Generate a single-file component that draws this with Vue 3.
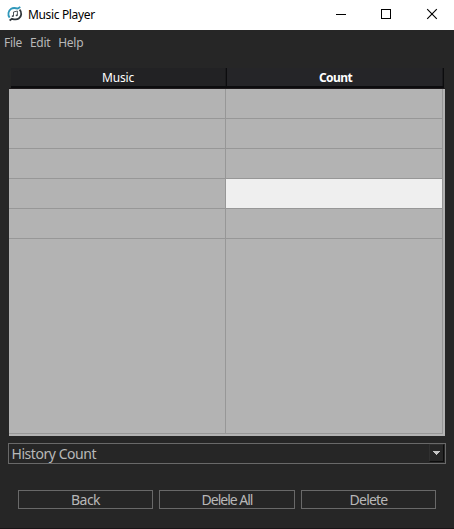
<script setup>
const menus = ['File', 'Edit', 'Help']
const rows = [0, 1, 2, 3, 4]
const actions = ['Back', 'Delele All', 'Delete']
</script>

<template>
  <div class="window">
    <header class="titlebar">
      <svg class="logo" width="16" height="16" viewBox="0 0 16 16">
        <path d="M2.6 11.6C.4 8.8 1.3 4.6 4.2 2.8C6.4 1.4 8.8 2 10.8 2.6L13.3 1" fill="none" stroke="#2f97ba" stroke-width="1.8" />
        <path d="M12.6 3.6C15.2 6.2 14.6 10.6 11.8 12.5C9.6 14 7.3 13.4 5 12.8L2.6 14.4" fill="none" stroke="#30373c" stroke-width="1.8" />
        <path d="M6.5 10V6L10.4 5V9.2" fill="none" stroke="#3d454a" stroke-width=".9" />
        <ellipse cx="5.8" cy="10.1" rx="1.1" ry=".9" fill="#3d454a" />
        <ellipse cx="9.7" cy="9.3" rx="1.1" ry=".9" fill="#3d454a" />
      </svg>
      <span class="title">Music Player</span>
      <svg class="controls" width="118" height="30" viewBox="0 0 118 30" fill="none" stroke="#000">
        <path d="M0 14.5H10" shape-rendering="crispEdges" />
        <rect x="45.5" y="9.5" width="9" height="9" shape-rendering="crispEdges" />
        <path d="M91.2 9.2L100.8 18.8M100.8 9.2L91.2 18.8" stroke-width="1.15" />
      </svg>
    </header>
    <nav class="menubar">
      <span v-for="m in menus" :key="m">{{ m }}</span>
    </nav>
    <main>
      <section class="table">
        <div class="head">
          <div class="th"><span class="music">Music</span></div>
          <div class="th active"><span class="count">Count</span></div>
        </div>
        <div class="body">
          <div v-for="r in rows" :key="r" class="row">
            <div class="cell"></div>
            <div class="cell" :class="{ selected: r === 3 }"></div>
          </div>
          <div class="row rest">
            <div class="cell"></div>
            <div class="cell"></div>
          </div>
        </div>
      </section>
      <div class="combo">
        <span>History Count</span>
        <div class="arrow">
          <svg width="7" height="4" viewBox="0 0 7 4" shape-rendering="crispEdges"><path d="M0 0H7V1H6V2H5V3H4V4H3V3H2V2H1V1H0Z" fill="#c4c4c4" /></svg>
        </div>
      </div>
      <div class="actions">
        <button v-for="(a, i) in actions" :key="a" :class="'b' + i">{{ a }}</button>
      </div>
    </main>
  </div>
</template>

<style>
body { margin: 0; background: #262626; }
</style>

<style scoped>
* { box-sizing: border-box; }
.window {
  width: 454px;
  height: 529px;
  display: flex;
  flex-direction: column;
  background: #262626;
  border-bottom: 1px solid #191517;
  font-family: "Noto Sans", "Open Sans", sans-serif;
  font-size: 12px;
  white-space: nowrap;
  overflow: hidden;
}
.titlebar {
  height: 30px;
  flex: none;
  display: flex;
  align-items: center;
  padding-left: 7px;
  background: #fff;
  color: #000;
}
.logo { margin-top: -2px; }
.title { margin-left: 5px; font-size: 12px; letter-spacing: -0.35px; line-height: 30px; }
.controls { margin-left: auto; }
.menubar {
  height: 38px;
  flex: none;
  display: flex;
  gap: 8px;
  padding: 4px 0 0 4px;
  line-height: 18px;
  letter-spacing: -0.3px;
  color: #b8b8b8;
}
main { padding: 0 8px; }
.table { margin-left: 1px; width: 436px; }
.head {
  height: 21px;
  display: grid;
  grid-template-columns: 216px 217px;
  padding-left: 2px;
  border-bottom: 1px solid #1e1a1c;
}
.th {
  height: 20px;
  border-right: 1px solid #0c0c0e;
  border-bottom: 2px solid #0c0c0e;
  background: #222224;
  color: #fff;
  text-align: center;
  line-height: 19px;
  box-shadow: inset -1px 0 #1b1b1d;
}
.th:first-child { padding-right: 1px; }
.active { background: #252528; font-weight: 700; }
.music { letter-spacing: -0.2px; }
.count { letter-spacing: -0.6px; margin-left: 1px; }
.body {
  height: 347px;
  display: flex;
  flex-direction: column;
  background: #b3b3b3;
}
.row { display: grid; grid-template-columns: 217px 217px; height: 30px; }
.cell { border-right: 1px solid #979797; border-bottom: 1px solid #979797; }
.rest { height: 195px; }
.selected { background: #efefef; }
.combo {
  display: flex;
  justify-content: space-between;
  height: 21px;
  margin-top: 7px;
  padding-left: 2.5px;
  border: 1px solid #696969;
  color: #b8b8b8;
  font-size: 14px;
  line-height: 20px;
  letter-spacing: -0.45px;
}
.arrow {
  width: 15px;
  height: 18px;
  margin-right: 1px;
  display: flex;
  align-items: center;
  justify-content: center;
  border: 1px solid #303030;
  border-right-color: #0c0c0c;
  border-bottom-color: #0c0c0c;
}
.actions {
  display: grid;
  grid-template-columns: 135px 136px 135px;
  gap: 6px;
  margin-top: 26px;
  padding-left: 10px;
}
button {
  height: 19px;
  padding: 0;
  border: 1px solid #696969;
  background: #262626;
  color: #b8b8b8;
  font-family: inherit;
  font-size: 14px;
  line-height: 17px;
  letter-spacing: -0.6px;
}
.b0 { letter-spacing: -0.5px; }
.b1 { letter-spacing: -1px; }
.b2 { letter-spacing: -0.8px; }
</style>
